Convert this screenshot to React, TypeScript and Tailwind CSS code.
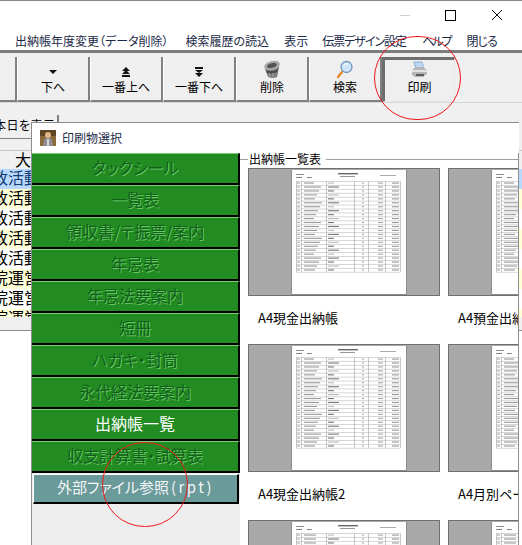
import React from "react";

const menu: [string, string][] = [
  ["出納帳年度変更（データ削除）", "ml-[15px]"],
  ["検索履歴の読込", "ml-[17px]"],
  ["表示", "ml-[15px]"],
  ["伝票デザイン設定", "ml-[14px] tracking-[-1px]"],
  ["ヘルプ", "ml-[16px] tracking-[-2px]"],
  ["閉じる", "ml-[16px] tracking-[-1px]"],
];

const rows: [string, string][] = [
  ["政活動", "bg-[#b9d9ff] text-[#123a70]"],
  ["政活動", "bg-[#ffffd8] text-black"],
  ["政活動", "bg-white text-black"],
  ["政活動", "bg-[#ffffd8] text-black"],
  ["政活動", "bg-white text-black"],
  ["院運営", "bg-[#ffffd8] text-black"],
  ["院運営", "bg-white text-black"],
];

const greens = [
  "タックシール",
  "一覧表",
  "領収書/〒振票/案内",
  "年忌表",
  "年忌法要案内",
  "短冊",
  "ハガキ・封筒",
  "永代経法要案内",
  "出納帳一覧",
  "収支計算書・試算表",
];

function ArrowOne() {
  return (
    <svg width="8" height="19" viewBox="0 0 8 19">
      <path d="M0 10h8L4 14z" fill="#111" />
    </svg>
  );
}
function ArrowUp2() {
  return (
    <svg width="8" height="19" viewBox="0 0 8 19">
      <path d="M4 7l4 4H0zM4 10l4 4H0zM0 15h8v2H0z" fill="#111" />
    </svg>
  );
}
function ArrowDown2() {
  return (
    <svg width="8" height="19" viewBox="0 0 8 19">
      <path d="M0 7h8v2H0zM0 10h8l-4 3zM0 13h8l-4 4z" fill="#111" />
    </svg>
  );
}
function Trash() {
  return (
    <svg width="20" height="19" viewBox="0 0 20 19">
      <path d="M3 6l13-3 1 5-2 9q-4 2-9 0L3 9z" fill="#7d7d7d" />
      <ellipse cx="10" cy="5.5" rx="8" ry="4.5" transform="rotate(-14 10 5.5)" fill="#a9a9a9" />
      <ellipse cx="10" cy="5.5" rx="5" ry="2.4" transform="rotate(-14 10 5.5)" fill="#555" />
      <path d="M4 10q6 3 12-1l-1 3q-5 3-10 1z" fill="#4a4a4a" />
      <path d="M7 13l1 4M11 13l0 4" stroke="#a5a5a5" strokeWidth="1" />
    </svg>
  );
}
function Magnifier() {
  return (
    <svg width="18" height="19" viewBox="0 0 18 19">
      <path d="M6 12l-4 5" stroke="#e28a2c" strokeWidth="2.5" strokeLinecap="round" />
      <circle cx="10.5" cy="7" r="5.5" fill="#cfe6fb" stroke="#6f93c4" strokeWidth="1.3" />
      <path d="M8 5q2-2 4-1" stroke="#fff" strokeWidth="1.2" fill="none" />
    </svg>
  );
}
function Printer() {
  return (
    <svg width="17" height="19" viewBox="0 0 17 19">
      <path d="M3 2h8l2 7H5z" fill="#bcd8f5" stroke="#7f9fc4" strokeWidth="0.8" />
      <path d="M1 10l4-3h7l4 3v4l-4 3H4l-3-2z" fill="#b5b5b5" />
      <path d="M1 10h15v2H1z" fill="#e3e3e3" />
      <path d="M5 14h8v2H5z" fill="#5c5c5c" />
    </svg>
  );
}
function Avatar() {
  return (
    <svg width="16" height="16" viewBox="0 0 16 16" className="shrink-0">
      <rect width="16" height="16" fill="#8a6a3a" />
      <rect x="0" y="0" width="16" height="6" fill="#5f4423" />
      <circle cx="8" cy="5" r="3" fill="#e0b888" />
      <path d="M3 16l1-7q4-2 8 0l1 7z" fill="#8d8d92" />
      <path d="M7 9h2v7H7z" fill="#d8d8d8" />
    </svg>
  );
}

function Doc({ variant = 0 }: { variant?: number }) {
  const ys = Array.from({ length: 24 }, (_, i) => 11 + i * 3.95);
  const cols = [4, 9, 34, 62, 76, 93, 108];
  return (
    <svg width="192" height="126" viewBox="0 0 192 126" className="block">
      <rect x="42" y="1" width="116" height="125" fill="#8c8c8c" />
      <rect x="43" y="1" width="114" height="124" fill="#fff" />
      <g transform="translate(43 1)">
        <rect x="46" y="3" width="20" height="1.4" fill="#666" />
        <rect x="48" y="6" width="15" height="1" fill="#999" />
        <rect x="4" y="4" width="8" height="1" fill="#888" />
        <rect x="4" y="7" width="6" height="1" fill="#888" />
        <rect x="15" y="7" width="5" height="1" fill="#888" />
        <rect x="88" y="5" width="16" height="1" fill="#aaa" />
        {ys.map((y, i) => (
          <g key={i}>
            <rect x="4" y={y} width="104" height="0.7" fill="#c4c4c4" />
            {i < 23 && (
              <>
                <rect x="5" y={y + 1.5} width="3" height="1.1" fill="#a8a8a8" />
                <rect x="12" y={y + 1.5} width={variant ? 12 : 10 + (i * 7) % 9} height="1.1" fill="#999" />
                <rect x="36" y={y + 1.5} width={6 + (i * 5) % 10} height="1.1" fill={i % 3 ? "#777" : "#bbb"} />
                <rect x="70" y={y + 1.5} width="2" height="1.1" fill="#aaa" />
                <rect x="86" y={y + 1.5} width="5" height="1.1" fill="#a5a5a5" />
                <rect x="100" y={y + 1.5} width="7" height="1.1" fill="#999" />
              </>
            )}
          </g>
        ))}
        {cols.map((x) => (
          <rect key={x} x={x} y="11" width="0.7" height="91" fill="#b0b0b0" />
        ))}
      </g>
    </svg>
  );
}

function Thumb({ label, variant }: { label: string; variant?: number }) {
  return (
    <div className="w-[192px]">
      <div className="h-[128px] bg-[#a9a9a9] border border-[#6f6f6f]">
        <Doc variant={variant} />
      </div>
      <div className="h-[48px] pl-[10px] pb-[4px] flex items-center text-[13px] text-black whitespace-nowrap">{label}</div>
    </div>
  );
}

function ToolBtn({ icon, label, pressed }: { icon: React.ReactNode; label: string; pressed?: boolean }) {
  return (
    <div
      className={
        pressed
          ? "w-[73px] h-[45px] flex flex-col items-center bg-[#efefef] border-l-[3px] border-t-[3px] border-l-[#6e6e6e] border-t-[#6e6e6e] border-r border-r-[#e6e6e6] border-b border-b-[#e6e6e6]"
          : "w-[73px] h-[45px] pt-[3px] flex flex-col items-center bg-[#efefef] border-l border-l-white border-r-2 border-r-[#808080] border-b-2 border-b-[#808080]"
      }
    >
      <div className="h-[19px] flex items-center justify-center">{icon}</div>
      <div className="text-[12px] leading-[16px] text-black">{label}</div>
    </div>
  );
}

export default function App() {
  return (
    <div className="relative w-[522px] h-[545px] overflow-hidden bg-white font-['Noto_Sans_CJK_JP','Liberation_Sans',sans-serif] [font-feature-settings:'palt']">
      {/* title bar */}
      <div className="h-[32px] border-t border-t-[#8a8a8a] flex items-center justify-end">
        <div className="w-[10px] h-px bg-[#d0d0d0] mr-[35px] -mt-[3px]" />
        <div className="w-[11px] h-[11px] border border-black mr-[35px] -mt-[3px]" />
        <svg width="12" height="12" viewBox="0 0 12 12" className="mr-[19px] -mt-[3px]">
          <path d="M1 1l10 10M11 1L1 11" stroke="#111" strokeWidth="1" />
        </svg>
      </div>
      {/* menu */}
      <div className="h-[18px] flex items-center text-[12px] text-[#1c2a48] whitespace-nowrap">
        {menu.map(([m, c]) => (
          <span key={m} className={c}>
            {m}
          </span>
        ))}
      </div>
      {/* toolbar */}
      <div className="h-[7px] bg-[#f0f0f0] border-t-[3px] border-t-[#7c7c7c]" />
      <div className="flex h-[45px] bg-[#f0f0f0]">
        <div className="w-[17px] h-[45px] bg-[#efefef] border-r-2 border-r-[#808080] border-b-2 border-b-[#808080]" />
        <ToolBtn icon={<ArrowOne />} label="下へ" />
        <ToolBtn icon={<ArrowUp2 />} label="一番上へ" />
        <ToolBtn icon={<ArrowDown2 />} label="一番下へ" />
        <ToolBtn icon={<Trash />} label="削除" />
        <ToolBtn icon={<Magnifier />} label="検索" />
        <ToolBtn icon={<Printer />} label="印刷" pressed />
      </div>
      {/* underlying form */}
      <div className="h-[229px] bg-[#f0f0f0] border-t border-t-[#d8d8d8] border-b border-b-[#8a8a8a] overflow-hidden">
        <div className="h-[12px]" />
        <div className="w-[59px] h-[24px] border-r-2 border-r-[#808080] border-b border-b-[#808080] overflow-hidden whitespace-nowrap text-[12px] leading-[19px] tracking-[0.5px] text-black -indent-[6px]">
          本日を表示
        </div>
        <div className="h-[11px]" />
        <div className="h-[19px] border-t border-t-[#c8c8c8] text-[16px] leading-[16px] pl-[15px] text-black">大</div>
        {rows.map(([t, c], i) => (
          <div key={i} className={`h-[20px] overflow-hidden whitespace-nowrap text-[16px] leading-[17px] -indent-[8px] ${c}`}>
            {t}
          </div>
        ))}
        <div className="h-[8px] bg-[#ffffd8] overflow-hidden whitespace-nowrap text-[16px] leading-[17px] -indent-[8px] text-black">
          院運営
        </div>
      </div>

      {/* dialog */}
      <div className="absolute left-[31px] top-[122px] w-[488px] h-[423px] bg-white border-t border-t-[#8a8a8a] border-l border-l-[#8e8e8e] flex flex-col">
        <div className="h-[30px] flex items-center gap-[6px] pl-[8px] text-[12px] text-[#1c2a48] shrink-0">
          <Avatar />
          <span>印刷物選択</span>
        </div>
        <div className="flex flex-1 min-h-0">
          {/* left list */}
          <div className="w-[208px] shrink-0 bg-[#eeeeee] flex flex-col">
            {greens.map((g) => (
              <div
                key={g}
                className={
                  g === "出納帳一覧"
                    ? "h-[32px] pb-[3px] shrink-0 flex items-center justify-center bg-[#228b22] border-t border-t-[#79d079] border-b-2 border-b-black border-r-2 border-r-black text-[16px] text-white"
                    : "h-[32px] pb-[3px] shrink-0 flex items-center justify-center bg-[#228b22] border-t border-t-[#79d079] border-b-2 border-b-black border-r-2 border-r-black text-[16px] text-[#14601a] [text-shadow:1px_1px_0_#62c862]"
                }
              >
                {g}
              </div>
            ))}
            <div className="mt-[1px] ml-[1px] w-[206px] h-[30px] pb-[3px] shrink-0 flex items-center justify-center bg-[#6a9a9a] border-l border-t border-l-white border-t-white border-b-2 border-r-2 border-b-black border-r-black text-[15px] text-[#f2f6f6]">
              外部ファイル参照<span className="tracking-[2.5px] ml-[2px]">(rpt)</span>
            </div>
          </div>
          {/* right list */}
          <div className="flex-1 min-w-0 overflow-hidden border-r border-r-[#8e8e8e]">
            <div className="flex items-center h-[16px] -mt-[2px] mb-[1px] whitespace-nowrap">
              <div className="w-[8px] h-px bg-[#a0a0a0]" />
              <span className="text-[12px] text-black px-[1px]">出納帳一覧表</span>
              <div className="flex-1 h-px bg-[#a0a0a0] ml-[4px]" />
            </div>
            <div className="grid grid-cols-[192px_192px] gap-x-[8px] pl-[8px] w-[400px]">
              <Thumb label="A4現金出納帳" />
              <Thumb label="A4預金出納帳" />
              <Thumb label="A4現金出納帳2" />
              <Thumb label="A4月別ページ" />
              <Thumb label="" variant={1} />
              <Thumb label="" variant={1} />
            </div>
          </div>
        </div>
      </div>

      {/* annotation circles */}
      <div className="absolute left-[374px] top-[36px] w-[87px] h-[84px] rounded-full border border-[#f01818]" />
      <div className="absolute left-[102px] top-[442px] w-[86px] h-[85px] rounded-full border border-[#f01818]" />
    </div>
  );
}
